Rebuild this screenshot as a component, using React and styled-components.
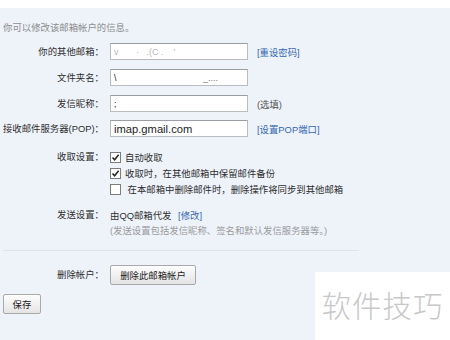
import React from 'react';
import styled, { createGlobalStyle } from 'styled-components';

const GlobalStyle = createGlobalStyle`
  html, body {
    margin: 0;
    padding: 0;
    background: #eef3fa;
  }
  body {
    font-family: "Liberation Sans", "Noto Sans CJK SC", sans-serif;
    font-size: 9.4px;
    color: #3a3a3a;
  }
`;

const Page = styled.div`
  position: relative;
  width: 450px;
  height: 340px;
  overflow: hidden;
  background: #eef3fa;
`;

const TopStrip = styled.div`
  height: 8px;
  background: #ffffff;
`;

const Intro = styled.div`
  margin: 13px 0 0 3px;
  line-height: 14px;
  color: #8c8c8c;
`;

const Form = styled.div`
  display: grid;
  grid-template-columns: 104px 1fr;
  column-gap: 6px;
  margin-top: ${(p) => p.$top || 0}px;
`;

const Label = styled.div`
  text-align: right;
  white-space: nowrap;
  line-height: ${(p) => p.$lh || 17}px;
  color: #2e2e2e;
  margin-top: ${(p) => p.$mt || 0}px;
`;

const Field = styled.div`
  display: flex;
  align-items: center;
  gap: 9px;
  margin-top: ${(p) => p.$mt || 0}px;
`;

const Input = styled.div`
  box-sizing: border-box;
  width: 138px;
  height: 17px;
  background: #fff;
  border: 1px solid #b9bcc1;
  border-top-color: #9a9da3;
  padding: 0 3px;
  display: flex;
  align-items: center;
  justify-content: space-between;
  font-size: ${(p) => (p.$big ? '11.2px' : '9px')};
  color: ${(p) => (p.$faint ? '#b8b8b8' : '#222')};
  white-space: nowrap;
`;

const Link = styled.span`
  color: #3567b0;
  white-space: nowrap;
`;

const Muted = styled.span`
  color: #555;
`;

const Options = styled.div`
  display: flex;
  flex-direction: column;
  margin-top: ${(p) => p.$mt || 0}px;
`;

const Option = styled.div`
  display: flex;
  align-items: center;
  gap: 4px;
  height: 16px;
  white-space: nowrap;
  color: #2e2e2e;
`;

const Box = styled.span`
  box-sizing: border-box;
  width: 11px;
  height: 11px;
  border: 1px solid #7d7d7d;
  background: #fff;
  display: inline-flex;
  align-items: center;
  justify-content: center;
`;

const Note = styled.div`
  color: #9a9a9a;
  line-height: 16px;
  white-space: nowrap;
`;

const Divider = styled.div`
  width: 356px;
  height: 1px;
  margin: 11px 0 0 3px;
  background: #dde3ec;
`;

const Button = styled.button`
  box-sizing: border-box;
  height: ${(p) => p.$h || 20}px;
  width: ${(p) => p.$w}px;
  padding: 0;
  font-family: inherit;
  font-size: 9.4px;
  color: #222;
  background: linear-gradient(#fdfdfd, #e4e4e4);
  border: 1px solid #a9a9a9;
  border-radius: 2px;
`;

const SaveRow = styled.div`
  margin: 9px 0 0 3px;
`;

const Watermark = styled.div`
  position: absolute;
  left: 315px;
  top: 272px;
  width: 135px;
  height: 68px;
  background: #fff;
  display: flex;
  align-items: center;
  justify-content: center;
  font-family: "Noto Sans CJK SC", sans-serif;
  font-weight: 300;
  font-size: 29.5px;
  letter-spacing: 1px;
  color: #c8c8c8;
  padding-bottom: 4px;
  box-sizing: border-box;
`;

const Check = ({ checked }) => (
  <Box>
    {checked && (
      <svg width="9" height="9" viewBox="0 0 9 9">
        <path d="M1.5 4.5 L3.6 6.8 L7.6 1.8" fill="none" stroke="#222" strokeWidth="1.5" />
      </svg>
    )}
  </Box>
);

export default function App() {
  return (
    <Page>
      <GlobalStyle />
      <TopStrip />
      <Intro>你可以修改该邮箱帐户的信息。</Intro>

      <Form $top={8}>
        <Label>你的其他邮箱：</Label>
        <Field>
          <Input $faint>
            <span>v&nbsp;&nbsp;&nbsp;&nbsp;&nbsp;&nbsp;&nbsp;·&nbsp;&nbsp;&nbsp;.(C&nbsp;.&nbsp;&nbsp;&nbsp;&nbsp;'</span>
          </Input>
          <Link>[重设密码]</Link>
        </Field>

        <Label $mt={9}>文件夹名：</Label>
        <Field $mt={9}>
          <Input>
            <span>\</span>
            <span style={{ color: '#777', marginRight: 26 }}>_....</span>
          </Input>
        </Field>

        <Label $mt={9}>发信昵称：</Label>
        <Field $mt={9}>
          <Input>
            <span>;</span>
          </Input>
          <Muted>(选填)</Muted>
        </Field>

        <Label $mt={8}>接收邮件服务器(POP)：</Label>
        <Field $mt={8}>
          <Input $big>
            <span>imap.gmail.com</span>
          </Input>
          <Link>[设置POP端口]</Link>
        </Field>

        <Label $mt={12} $lh={16}>收取设置：</Label>
        <Options $mt={12}>
          <Option>
            <Check checked />
            自动收取
          </Option>
          <Option>
            <Check checked />
            收取时，在其他邮箱中保留邮件备份
          </Option>
          <Option>
            <Check />
            &nbsp;在本邮箱中删除邮件时，删除操作将同步到其他邮箱
          </Option>
        </Options>

        <Label $mt={10} $lh={16}>发送设置：</Label>
        <Options $mt={10}>
          <Option>
            由QQ邮箱代发&nbsp;<Link>[修改]</Link>
          </Option>
          <Note>(发送设置包括发信昵称、签名和默认发信服务器等。)</Note>
        </Options>
      </Form>

      <Divider />

      <Form $top={14}>
        <Label $lh={20}>删除帐户：</Label>
        <Field>
          <Button $w={86}>删除此邮箱帐户</Button>
        </Field>
      </Form>

      <SaveRow>
        <Button $w={38}>保存</Button>
      </SaveRow>

      <Watermark>软件技巧</Watermark>
    </Page>
  );
}
